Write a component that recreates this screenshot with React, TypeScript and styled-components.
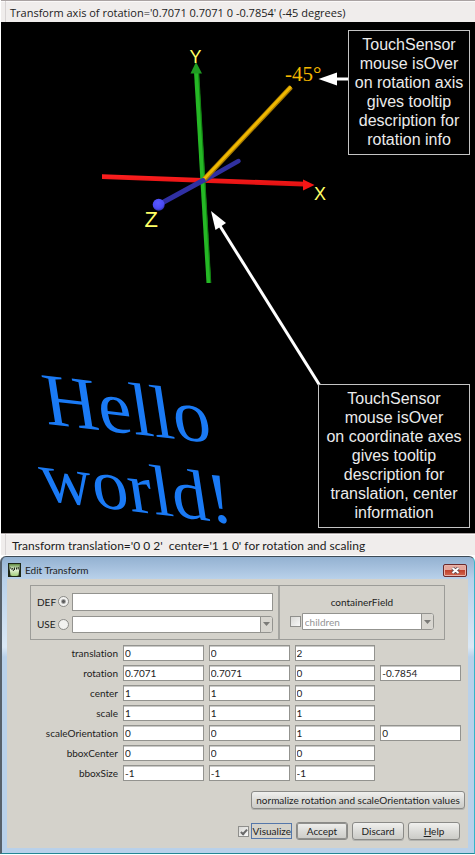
import React from "react";
import styled, { createGlobalStyle, css } from "styled-components";

const GlobalStyle = createGlobalStyle`
  *, *::before, *::after { box-sizing: border-box; }
  body { margin: 0; background: #fff; }
`;

const uiFont = `Lato, "Open Sans", sans-serif`;

const Page = styled.main`
  display: flex;
  flex-direction: column;
  font-family: ${uiFont};
  font-variant-ligatures: none;
  color: #1c1c1c;
`;

const StatusBar = styled.p<{ $compact?: boolean }>`
  margin: 0 0 0 1px;
  height: 22px;
  padding: 0 4px;
  display: flex;
  align-items: center;
  background: #f0edec;
  border-top: 1px solid #aaa3a3;
  box-shadow: inset 0 1px #fbf9f9;
  font-family: ${(p) => (p.$compact ? `"Open Sans", sans-serif` : uiFont)};
  font-size: ${(p) => (p.$compact ? "11px" : "12px")};
  white-space: pre;
`;

const StatusText = styled.span<{ $inset: number }>`
  align-self: stretch;
  display: flex;
  align-items: center;
  border-left: 1px solid #d8d4d4;
  padding: 2px 0 0 ${(p) => p.$inset}px;
`;

const Scene = styled.section`
  position: relative;
  margin-left: 1px;
  background: #000;
  overflow: hidden;
`;

const Drawing = styled.svg`
  display: block;
  width: 100%;
  height: 511px;
`;

const Callout = styled.p<{ $top: number; $width: number }>`
  position: absolute;
  top: ${(p) => p.$top}px;
  right: 5px;
  width: ${(p) => p.$width}px;
  margin: 0;
  padding: 4px 0 5px;
  border: 1px solid #c4c4c4;
  color: #ebebeb;
  font: 16px/19px "Liberation Sans", Arial, sans-serif;
  text-align: center;
`;

const Dialog = styled.form`
  display: flex;
  flex-direction: column;
  margin-top: 1px;
  border: 1px solid #3d4a55;
  border-left: 2px solid #57616b;
  border-right-color: #35b5c8;
  border-bottom-color: #238695;
  border-radius: 6px 6px 0 0;
  background: linear-gradient(#93b1d1, #b9d1ea 22px, #dbe8f5 90px, #b9d1ea 100px);
  padding: 0 6px 5px 5px;
  font-size: 10px;
  line-height: 14px;
`;

const TitleBar = styled.header`
  height: 22px;
  display: flex;
  align-items: center;
  gap: 4px;
  padding: 4px 1px 0;
`;

const Title = styled.h1`
  margin: 0;
  flex: 1;
  font: inherit;
`;

const CloseButton = styled.button`
  width: 24px;
  height: 13px;
  padding: 0;
  display: grid;
  place-items: center;
  border: 1px solid #6b2a2c;
  border-radius: 2px;
  background: linear-gradient(#e4a79c 0 45%, #c0412c 50%, #d2684f);
  box-shadow: inset 0 0 0 1px #e9b3a8;
`;

const Body = styled.div`
  background: #d4d2cb;
  display: flex;
  flex-direction: column;
  padding: 6px 3px 8px;
`;

const Identity = styled.div`
  display: grid;
  grid-template-columns: 250fr 165fr;
  margin: 0 20px 0 20px;
  border: 1px solid #9c9c98;
  height: 55px;
`;

const NamePane = styled.div`
  display: flex;
  flex-direction: column;
  justify-content: center;
  gap: 5px;
  padding: 1px 5px 1px 6px;
  border-right: 2px solid #a5a5a1;
`;

const NameRow = styled.div`
  display: grid;
  grid-template-columns: 17px 10px 1fr;
  align-items: center;
  column-gap: 4px;
`;

const ContainerPane = styled.div`
  display: flex;
  flex-direction: column;
  align-items: center;
  padding: 9px 10px 0;
  gap: 4px;
`;

const ContainerRow = styled.div`
  width: 100%;
  display: flex;
  align-items: center;
  gap: 1px;
`;

const field = css`
  display: block;
  width: 100%;
  min-width: 0;
  margin: 0;
  background: #fff;
  border: 1px solid #93938f;
  border-radius: 0;
  color: #1c1c1c;
  font: 10px/14px ${uiFont};
  outline: none;
`;

const NameInput = styled.input`
  ${field}
  height: 18px;
  padding: 0 2px;
`;

const ValueInput = styled.input`
  ${field}
  height: 16px;
  padding: 0 1px;
  box-shadow: inset 0 1px #c9c9c6;
`;

const SelectWrap = styled.div`
  position: relative;
  flex: 1;
`;

const Select = styled.select`
  ${field}
  appearance: none;
  height: 17px;
  padding: 0 14px 0 2px;
  border-radius: 0 3px 3px 0;
  &:disabled { color: #959595; opacity: 1; }
`;

const SelectArrow = styled.span`
  position: absolute;
  top: 1px;
  bottom: 1px;
  right: 1px;
  width: 12px;
  display: grid;
  place-items: center;
  border-left: 1px solid #93938f;
  border-radius: 0 2px 2px 0;
  background: #d8d6d0;
  pointer-events: none;
`;

const Radio = styled.input`
  appearance: none;
  width: 11px;
  height: 11px;
  margin: 0;
  border: 1px solid #8b8b88;
  border-radius: 50%;
  background: #f2f2f0;
  &:checked { background: radial-gradient(circle, #5d5d5d 0 1px, #f2f2f0 3px); }
`;

const Check = styled.input`
  appearance: none;
  width: 11px;
  height: 11px;
  margin: 0;
  flex: none;
  display: grid;
  place-items: center;
  border: 1px solid #8f8f8c;
  background: linear-gradient(135deg, #d9d9d6, #f8f8f7);
  &:checked::before {
    content: "";
    width: 4px;
    height: 7px;
    border: solid #6a6a6a;
    border-width: 0 2px 2px 0;
    rotate: 42deg;
  }
`;

const Values = styled.div`
  display: grid;
  gap: 4px;
  margin: 5px 4px 0 0;
`;

const ValueRow = styled.div`
  display: grid;
  grid-template-columns: 108px repeat(4, 1fr);
  align-items: center;
  column-gap: 5px;
`;

const RowLabel = styled.span`
  text-align: right;
`;

const Button = styled.button<{ $primary?: boolean }>`
  height: 18px;
  padding: 0 4px;
  border: 1px solid #8a8a87;
  border-radius: 3px;
  background: linear-gradient(#f0f0ee, #dededb 45%, #cbcbc7);
  box-shadow: ${(p) => (p.$primary ? "inset 0 0 0 1px #90908d" : "0 1px #b3b3af")};
  color: #1c1c1c;
  font: 10px/14px ${uiFont};
  white-space: nowrap;
`;

const NormalizeButton = styled(Button)`
  width: 214px;
  align-self: flex-end;
  margin-top: 10px;
`;

const Actions = styled.footer`
  display: flex;
  justify-content: flex-end;
  align-items: center;
  gap: 4px;
  margin: 13px 5px 0 0;

  ${Button} { width: 52px; }
`;

const Visualize = styled.label`
  display: flex;
  align-items: center;
  gap: 2px;
`;

const VisualizeText = styled.span`
  border: 1px solid #5577aa;
`;

const DownArrow = () => (
  <SelectArrow>
    <svg width="7" height="4" viewBox="0 0 7 4" aria-hidden="true">
      <path d="M0 0h7L3.5 4z" fill="#7b7b78" />
    </svg>
  </SelectArrow>
);

const AppIcon = () => (
  <svg width="13" height="14" viewBox="0 0 13 14" aria-hidden="true">
    <defs>
      <linearGradient id="leaf" x1="0" y1="0" x2="0" y2="1">
        <stop offset="0" stopColor="#5f8a3e" />
        <stop offset=".45" stopColor="#e6f2da" />
        <stop offset="1" stopColor="#a5d07c" />
      </linearGradient>
    </defs>
    <path d="M0 0h13v14H0z" fill="#1d2616" />
    <path d="M1 1h11l-1.500 11.500q-4 1-8 0z" fill="url(#leaf)" />
    <path d="M2.500 4.500l1 2M4.500 5l1 3M6.500 4.500v2.500M8.500 4.500v2M10.200 4v2.500" fill="none" stroke="#1d2616" />
  </svg>
);

const rows: { name: string; values: string[] }[] = [
  { name: "translation", values: ["0", "0", "2"] },
  { name: "rotation", values: ["0.7071", "0.7071", "0", "-0.7854"] },
  { name: "center", values: ["1", "1", "0"] },
  { name: "scale", values: ["1", "1", "1"] },
  { name: "scaleOrientation", values: ["0", "0", "1", "0"] },
  { name: "bboxCenter", values: ["0", "0", "0"] },
  { name: "bboxSize", values: ["-1", "-1", "-1"] },
];

const AxesDrawing = () => (
  <Drawing viewBox="1 22 474 511" preserveAspectRatio="xMaxYMin meet">
    <defs>
      <linearGradient id="red" x1="0" y1="0" x2="0" y2="1">
        <stop offset="0" stopColor="#ff2020" />
        <stop offset="1" stopColor="#e01010" />
      </linearGradient>
      <radialGradient id="ball" cx=".45" cy=".35" r=".65">
        <stop offset="0" stopColor="#5a5aff" />
        <stop offset=".7" stopColor="#4a4af5" />
        <stop offset="1" stopColor="#3030a8" />
      </radialGradient>
    </defs>
    <path d="M102 174.200L304 181.700V186.500L102 179z" fill="url(#red)" />
    <path d="M303 179.500L314.500 185L303 190.500z" fill="#f51616" />
    <path d="M194 72L198.800 72L211 283L206.500 283z" fill="#25b825" />
    <path d="M198 72L199.200 72L211.300 283L210.200 283z" fill="#128012" />
    <path d="M196 62L202 73.500H190.500z" fill="#1f9c22" />
    <path d="M205 180L238.500 161" stroke="#3030a0" strokeWidth="4.500" strokeLinecap="round" />
    <path d="M204 179.500L291 87" stroke="#a87c00" strokeWidth="5" />
    <path d="M204 179L291 86.500" stroke="#f0b800" strokeWidth="2.800" />
    <path d="M203 180.500L160 204" stroke="#3030a4" strokeWidth="5" strokeLinecap="round" />
    <circle cx="158.700" cy="204.700" r="6" fill="url(#ball)" />

    <g fill="#ffff66" fontFamily="Liberation Sans, Arial, sans-serif" fontSize="18">
      <text x="189.500" y="62.500">Y</text>
      <text x="314" y="199.500">X</text>
      <text x="144.500" y="227" fontSize="22">Z</text>
    </g>
    <text x="285" y="81" fill="#f5b800" fontFamily="Liberation Serif, Times New Roman, serif" fontSize="21">-45°</text>

    <g fill="#1a7af5" fontFamily="Liberation Serif, Times New Roman, serif">
      <text transform="matrix(1 .115 .155 1 47 424)" fontSize="75">Hello</text>
      <text transform="matrix(1 .125 .155 1 43 500)" fontSize="72">world!</text>
    </g>

    <path d="M348 79H334" stroke="#fff" strokeWidth="3" />
    <path d="M318.500 79L337 72.500V85.500z" fill="#fff" />
    <path d="M220 226L319.500 385" stroke="#fff" strokeWidth="3" />
    <path d="M211 211L226 223L215.500 230z" fill="#fff" />
  </Drawing>
);

export default function App() {
  return (
    <Page>
      <GlobalStyle />
      <StatusBar $compact>
        <StatusText $inset={4}>Transform axis of rotation='0.7071 0.7071 0 -0.7854' (-45 degrees)</StatusText>
      </StatusBar>

      <Scene>
        <AxesDrawing />
        <Callout $top={8} $width={122}>
          TouchSensor<br />mouse isOver<br />on rotation axis<br />gives tooltip<br />description for<br />rotation info
        </Callout>
        <Callout $top={362} $width={152}>
          TouchSensor<br />mouse isOver<br />on coordinate axes<br />gives tooltip<br />description for<br />translation, center<br />information
        </Callout>
      </Scene>

      <StatusBar>
        <StatusText $inset={6}>{"Transform translation='0 0 2'  center='1 1 0' for rotation and scaling"}</StatusText>
      </StatusBar>

      <Dialog onSubmit={(e) => e.preventDefault()}>
        <TitleBar>
          <AppIcon />
          <Title>Edit Transform</Title>
          <CloseButton type="button" aria-label="Close">
            <svg width="9" height="7" viewBox="0 0 9 7" aria-hidden="true">
              <path d="M1.500 1l6 5M7.500 1l-6 5" stroke="#5a4a50" strokeWidth="3.500" />
              <path d="M1.500 1l6 5M7.500 1l-6 5" stroke="#fff" strokeWidth="2" />
            </svg>
          </CloseButton>
        </TitleBar>
        <Body>
          <Identity>
            <NamePane>
              <NameRow>
                <label htmlFor="def">DEF</label>
                <Radio id="def" type="radio" name="mode" defaultChecked />
                <NameInput aria-label="DEF name" />
              </NameRow>
              <NameRow>
                <label htmlFor="use">USE</label>
                <Radio id="use" type="radio" name="mode" />
                <SelectWrap>
                  <Select aria-label="USE name" disabled />
                  <DownArrow />
                </SelectWrap>
              </NameRow>
            </NamePane>
            <ContainerPane>
              <label htmlFor="containerField">containerField</label>
              <ContainerRow>
                <Check type="checkbox" aria-label="Override containerField" />
                <SelectWrap>
                  <Select id="containerField" disabled>
                    <option>children</option>
                  </Select>
                  <DownArrow />
                </SelectWrap>
              </ContainerRow>
            </ContainerPane>
          </Identity>

          <Values>
            {rows.map((row) => (
              <ValueRow key={row.name}>
                <RowLabel id={row.name}>{row.name}</RowLabel>
                {row.values.map((value, i) => (
                  <ValueInput key={i} aria-labelledby={row.name} defaultValue={value} />
                ))}
              </ValueRow>
            ))}
          </Values>

          <NormalizeButton type="button">normalize rotation and scaleOrientation values</NormalizeButton>

          <Actions>
            <Visualize>
              <Check type="checkbox" defaultChecked />
              <VisualizeText>Visualize</VisualizeText>
            </Visualize>
            <Button type="submit" $primary>Accept</Button>
            <Button type="button">Discard</Button>
            <Button type="button"><u>H</u>elp</Button>
          </Actions>
        </Body>
      </Dialog>
    </Page>
  );
}
